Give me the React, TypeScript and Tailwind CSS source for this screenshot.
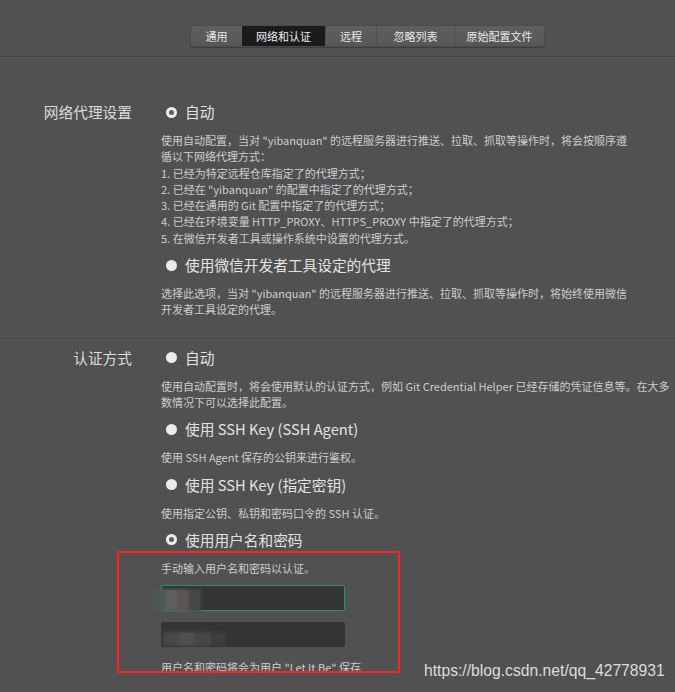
import { ReactNode } from 'react'

const tabs = ['通用', '网络和认证', '远程', '忽略列表', '原始配置文件']

function Radio({ checked, children }: { checked?: boolean; children: ReactNode }) {
  return (
    <div className="flex h-[22px] items-center pl-[5px]">
      {checked ? (
        <span className="flex h-[11px] w-[11px] items-center justify-center rounded-full bg-[#ececec]">
          <span className="h-[5px] w-[5px] rounded-full bg-[#5e5e5e]" />
        </span>
      ) : (
        <span className="h-[11px] w-[11px] rounded-full bg-[#ebebeb]" />
      )}
      <span className="ml-[8px] text-[14.7px] leading-[22px] text-[#e2e2e2]">{children}</span>
    </div>
  )
}

function Desc({ lines }: { lines: string[] }) {
  return (
    <div className="mt-[9px] mb-[8px] text-[11px] leading-[16.3px] text-[#cdcdcd]">
      {lines.map((l, i) => (
        <div key={i} className="whitespace-nowrap">{l}</div>
      ))}
    </div>
  )
}

function Row({ label, children, className }: { label: string; children: ReactNode; className?: string }) {
  return (
    <div className={`grid grid-cols-[132px_1fr] gap-x-[29px] ${className ?? ''}`}>
      <div className="h-[22px] text-right text-[14.7px] leading-[22px] text-[#dadada]">{label}</div>
      <div className="relative">{children}</div>
    </div>
  )
}

export default function App() {
  return (
    <div
      className="relative h-[692px] w-[675px] overflow-hidden bg-[#515151]"
      style={{ fontFamily: '"Noto Sans CJK SC", "Noto Sans", sans-serif' }}
    >
      {/* Settings tabs */}
      <div className="flex pt-[25px] pl-[190px]">
        <div className="flex h-[22px] overflow-hidden rounded-[4px] border border-[#4b4b4b] bg-gradient-to-b from-[#5f5f5f] to-[#575757] shadow-[0_1px_1px_rgba(0,0,0,0.25)]">
          {tabs.map((t, i) => (
            <div
              key={t}
              className={`flex items-center justify-center text-[11px] ${
                i === 1 ? 'bg-[#1b1b1b] text-[#ececec]' : 'text-[#e8e8e8]'
              } ${i > 1 ? 'border-l border-[#4e4e4e]' : ''} ${
                ['w-[51px]', 'w-[83px]', 'w-[51px]', 'w-[78px]', 'w-[90px]'][i]
              }`}
            >
              {t}
            </div>
          ))}
        </div>
      </div>
      <div className="mt-[9px] h-px bg-[#454545]" />
      <div className="h-px bg-[#575757]" />

      {/* Proxy settings */}
      <Row label="网络代理设置" className="pt-[43px] pb-[12px]">
        <Radio checked>自动</Radio>
        <Desc
          lines={[
            '使用自动配置，当对 "yibanquan" 的远程服务器进行推送、拉取、抓取等操作时，将会按顺序遵',
            '循以下网络代理方式：',
            '1. 已经为特定远程仓库指定了的代理方式；',
            '2. 已经在 "yibanquan" 的配置中指定了的代理方式；',
            '3. 已经在通用的 Git 配置中指定了的代理方式；',
            '4. 已经在环境变量 HTTP_PROXY、HTTPS_PROXY 中指定了的代理方式；',
            '5. 在微信开发者工具或操作系统中设置的代理方式。',
          ]}
        />
        <Radio>使用微信开发者工具设定的代理</Radio>
        <Desc
          lines={[
            '选择此选项，当对 "yibanquan" 的远程服务器进行推送、拉取、抓取等操作时，将始终使用微信',
            '开发者工具设定的代理。',
          ]}
        />
      </Row>
      <div className="h-px bg-[#464646]" />
      <div className="h-px bg-[#575757]" />

      {/* Authentication */}
      <Row label="认证方式" className="pt-[7px]">
        <Radio>自动</Radio>
        <Desc
          lines={[
            '使用自动配置时，将会使用默认的认证方式，例如 Git Credential Helper 已经存储的凭证信息等。在大多',
            '数情况下可以选择此配置。',
          ]}
        />
        <Radio>使用 SSH Key (SSH Agent)</Radio>
        <Desc lines={['使用 SSH Agent 保存的公钥来进行鉴权。']} />
        <Radio>使用 SSH Key (指定密钥)</Radio>
        <Desc lines={['使用指定公钥、私钥和密码口令的 SSH 认证。']} />
        <Radio checked>使用用户名和密码</Radio>
        <div className="mt-[9px] text-[11px] leading-[16px] text-[#cdcdcd]">手动输入用户名和密码以认证。</div>
        <div className="relative mt-[9px] h-[26px] w-[184px] rounded-[2px] border border-[#1f9a5c] bg-[#343434]">
          <div className="absolute top-[3px] left-[-9px] flex blur-[1.5px]">
            <div className="h-[22px] w-[12px] bg-[#4b5a52]" />
            <div className="h-[22px] w-[12px] bg-[#5e5e5e]" />
            <div className="h-[22px] w-[12px] bg-[#5a5752]" />
            <div className="h-[22px] w-[12px] bg-[#424a45]" />
          </div>
        </div>
        <div className="relative mt-[11px] h-[25px] w-[184px] rounded-[2px] bg-[#343434]">
          <div className="absolute top-[10px] left-[2px] flex blur-[1.5px]">
            <div className="h-[14px] w-[16px] bg-[#484848]" />
            <div className="h-[14px] w-[16px] bg-[#4f4f4f]" />
            <div className="h-[14px] w-[16px] bg-[#474747]" />
            <div className="h-[14px] w-[14px] bg-[#3e3e3e]" />
          </div>
        </div>
        <div className="mt-[12px] text-[11px] leading-[16px] text-[#cdcdcd]">用户名和密码将会为用户 "Let It Be" 保存</div>

        {/* annotation frame */}
        <div className="pointer-events-none absolute top-[204px] left-[-44px] h-[122px] w-[283px] rounded-[2px] border-2 border-[#ff2424]" />
      </Row>

      <div
        className="absolute top-[661px] left-[424px] text-[15.7px] leading-[20px] text-[#dcdcdc]"
        style={{ fontFamily: '"Liberation Sans", Arial, sans-serif' }}
      >
        https://blog.csdn.net/qq_42778931
      </div>
    </div>
  )
}
